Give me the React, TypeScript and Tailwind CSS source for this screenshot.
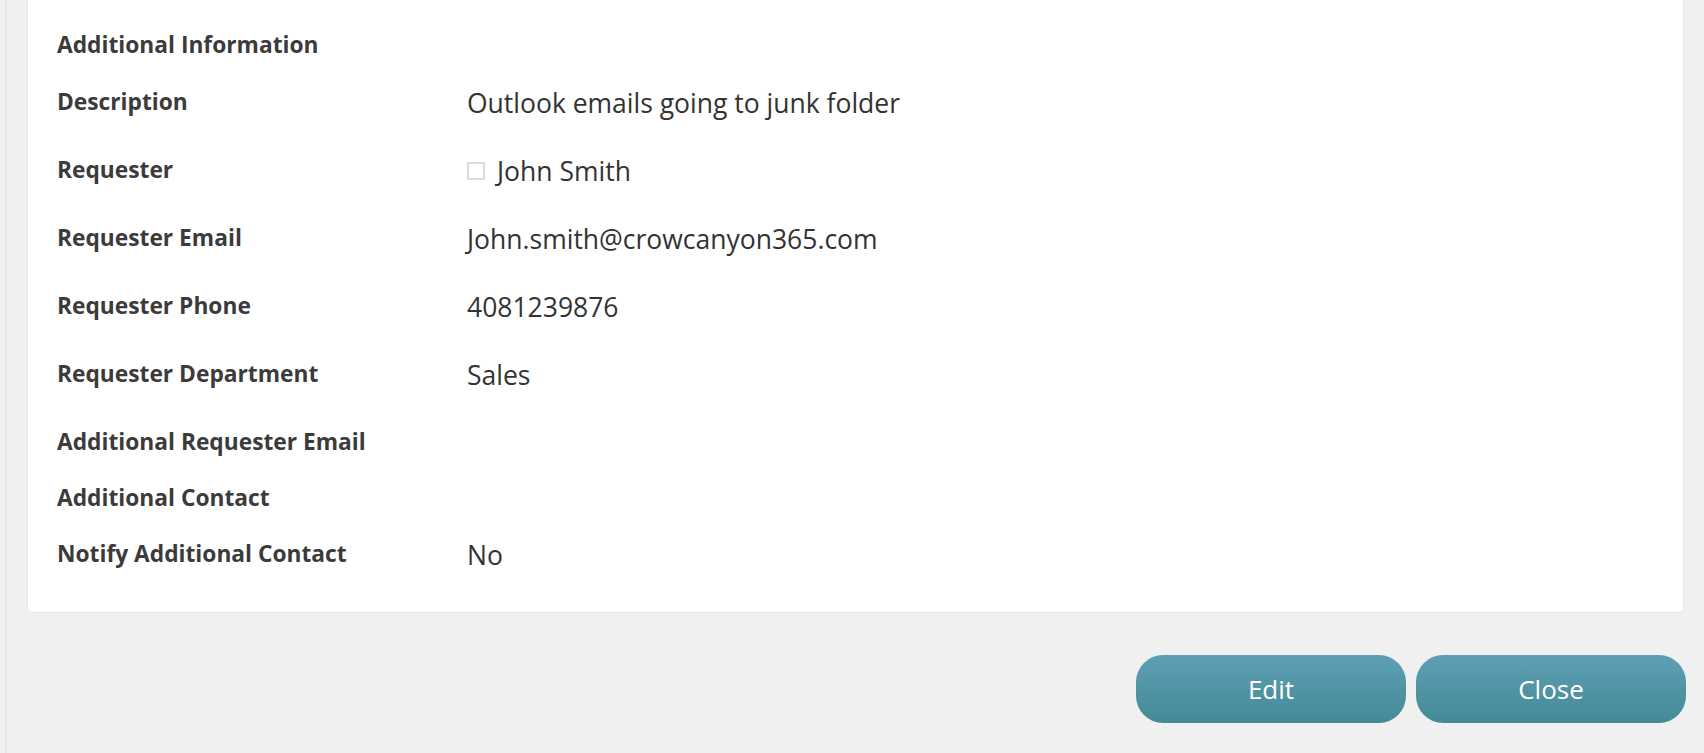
const fields: { label: string; value?: string; checkbox?: boolean }[] = [
  { label: 'Description', value: 'Outlook emails going to junk folder' },
  { label: 'Requester', value: 'John Smith', checkbox: true },
  { label: 'Requester Email', value: 'John.smith@crowcanyon365.com' },
  { label: 'Requester Phone', value: '4081239876' },
  { label: 'Requester Department', value: 'Sales' },
  { label: 'Additional Requester Email' },
  { label: 'Additional Contact' },
  { label: 'Notify Additional Contact', value: 'No' },
];

export default function App() {
  return (
    <div className="h-[753px] w-full overflow-hidden bg-[#f0f0f0] pl-[5px] font-['Open_Sans',sans-serif]">
      <div className="flex h-full flex-col border-l-2 border-[#e4e4e4] pl-[20px] pr-[20px]">
        {/* Card */}
        <div className="rounded-b-[5px] border-b border-r border-l border-[#e6e6e6] bg-white pl-[29px] pt-4 pb-5">
          <div className="pt-[13px] pb-[11px] text-[22.75px] font-bold leading-8 text-[#3b3b3b]">
            Additional Information
          </div>
          {fields.map((f) => (
            <div key={f.label} className="grid grid-cols-[410px_1fr] pt-3 pb-[10px]">
              <div className="pt-[2px] text-[22.75px] font-bold leading-8 text-[#3b3b3b]">{f.label}</div>
              <div className="flex items-center pb-2 text-[26.5px] leading-[38px] text-[#333333]">
                {f.checkbox && (
                  <span className="mr-3 inline-block h-[18px] w-[18px] border-2 border-[#dcdcdc] bg-white" />
                )}
                {f.value}
              </div>
            </div>
          ))}
        </div>

        {/* Actions */}
        <div className="mt-[42px] -mr-[2px] flex justify-end gap-[10px]">
          <button className="h-[68px] w-[270px] rounded-[27px] bg-gradient-to-b from-[#5e9fb6] to-[#448a95] text-[26px] text-white">
            Edit
          </button>
          <button className="h-[68px] w-[270px] rounded-[27px] bg-gradient-to-b from-[#5e9fb6] to-[#448a95] text-[26px] text-white">
            Close
          </button>
        </div>
      </div>
    </div>
  );
}
